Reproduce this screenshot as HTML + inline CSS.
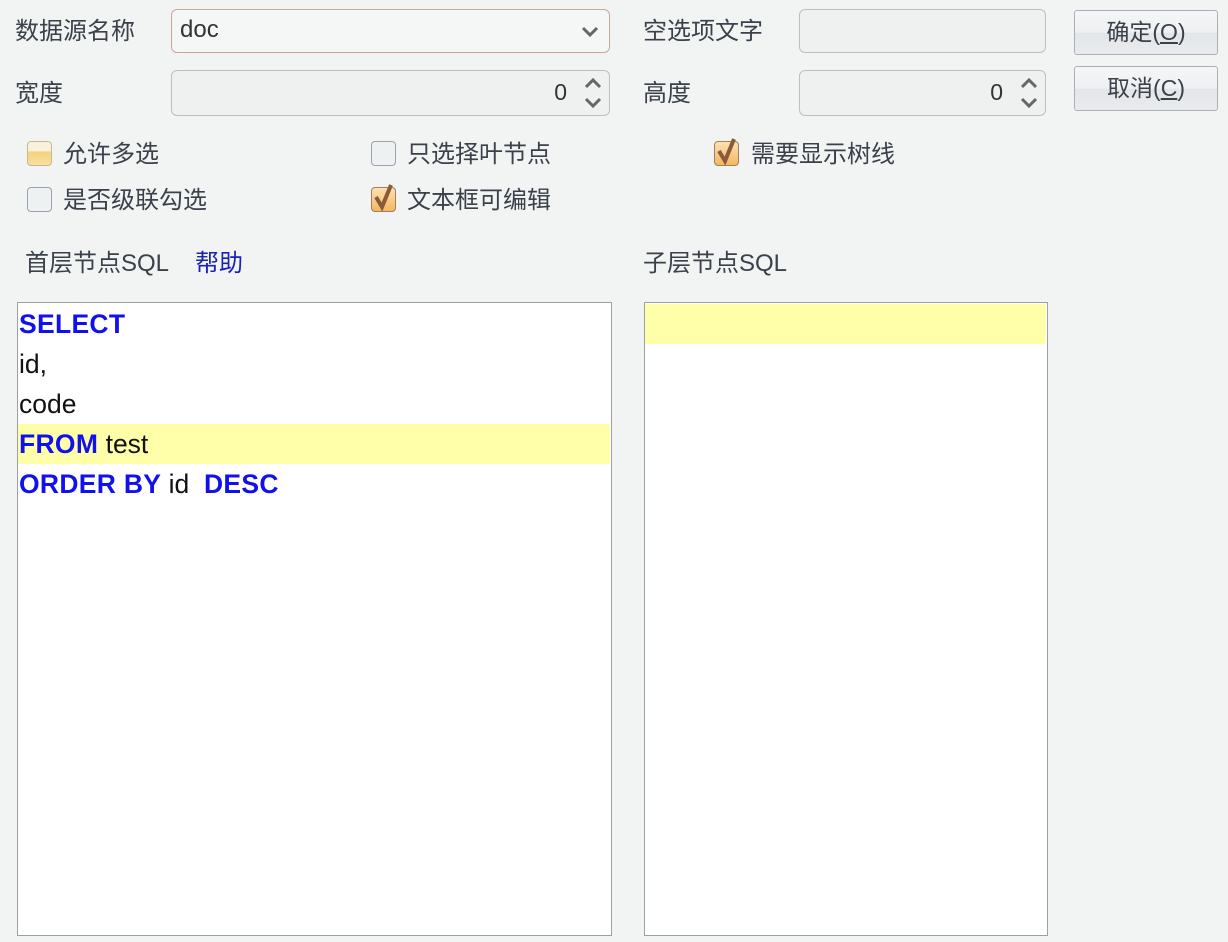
<!DOCTYPE html>
<html><head><meta charset="utf-8"><style>
body{margin:0;width:1228px;height:942px;background:#f2f4f3;font-family:"Liberation Sans","Noto Sans CJK SC",sans-serif;color:#3a414b;position:relative;overflow:hidden}
.a{position:absolute}
.lbl{font-size:24px;line-height:28px}
.field{position:absolute;border:1.5px solid #b9c0c5;border-radius:6px;background:#eff1f0;box-sizing:border-box}
.btn{position:absolute;border:1.5px solid #a9b0b6;border-radius:3px;background:linear-gradient(#f5f6f7 0,#eef0f2 50%,#e3e6e9 51%,#e9ebee);box-sizing:border-box;font-size:23px;text-align:center;line-height:42px}
.cb{position:absolute;width:25px;height:25px;border:1.5px solid #9aa3ab;border-radius:4px;background:#eef1f2;box-sizing:border-box}
.cb.on{border-color:#a08060;background:linear-gradient(#fbe2b0,#f6b660)}
.ta{position:absolute;border:1.5px solid #9aa0a6;background:#fff;box-sizing:border-box}
.ln{position:absolute;left:0;height:40px;line-height:40px;font-size:26.5px;color:#111;padding-left:1px;white-space:pre}
.k{color:#1111ee;font-weight:bold;letter-spacing:0.3px}
</style></head><body>
<div class="a lbl" style="left:15px;top:18px">数据源名称</div>
<div class="field" style="left:171px;top:9px;width:439px;height:44px;border-color:#c9a89a;background:#f5f7f6"><span class="a" style="left:8px;top:6px;font-size:24px;color:#333">doc</span>
<svg class="a" style="right:10px;top:16px" width="18" height="12"><path d="M2 2 L9 9 L16 2" stroke="#666" stroke-width="3" fill="none"/></svg></div>
<div class="a lbl" style="left:15px;top:80px">宽度</div>
<div class="field" style="left:171px;top:70px;width:439px;height:46px"><span class="a" style="right:42px;top:8px;font-size:23px;color:#333">0</span>
<svg class="a" style="right:6px;top:5px" width="20" height="34"><path d="M3 11 L10 4 L17 11 M3 23 L10 30 L17 23" stroke="#666" stroke-width="3" fill="none"/></svg></div>
<div class="a lbl" style="left:643px;top:18px">空选项文字</div>
<div class="field" style="left:799px;top:9px;width:247px;height:44px"></div>
<div class="a lbl" style="left:643px;top:80px">高度</div>
<div class="field" style="left:799px;top:70px;width:247px;height:46px"><span class="a" style="right:42px;top:8px;font-size:23px;color:#333">0</span>
<svg class="a" style="right:6px;top:5px" width="20" height="34"><path d="M3 11 L10 4 L17 11 M3 23 L10 30 L17 23" stroke="#666" stroke-width="3" fill="none"/></svg></div>
<div class="btn" style="left:1074px;top:10px;width:144px;height:45px">确定(<u>O</u>)</div>
<div class="btn" style="left:1074px;top:66px;width:144px;height:45px">取消(<u>C</u>)</div>

<div class="cb" style="left:27px;top:141px;border-color:#c8b890;background:linear-gradient(#f8f2dc 0,#f8f2dc 40%,#f3d37d 41%,#f7e0a0)"></div>
<div class="a lbl" style="left:63px;top:141px">允许多选</div>
<div class="cb" style="left:27px;top:187px"></div>
<div class="a lbl" style="left:63px;top:187px">是否级联勾选</div>
<div class="cb" style="left:371px;top:141px"></div>
<div class="a lbl" style="left:407px;top:141px">只选择叶节点</div>
<div class="cb on" style="left:371px;top:187px"></div>
<svg class="a" style="left:371px;top:182px" width="28" height="30"><path d="M5 15 L11 25 L20 3" stroke="#8a5a3a" stroke-width="4" fill="none"/></svg>
<div class="a lbl" style="left:407px;top:187px">文本框可编辑</div>
<div class="cb on" style="left:714px;top:141px"></div>
<svg class="a" style="left:714px;top:136px" width="28" height="30"><path d="M5 15 L11 25 L20 3" stroke="#8a5a3a" stroke-width="4" fill="none"/></svg>
<div class="a lbl" style="left:751px;top:141px">需要显示树线</div>

<div class="a lbl" style="left:25px;top:250px">首层节点SQL</div>
<div class="a lbl" style="left:195px;top:250px;color:#1a22b0">帮助</div>
<div class="a lbl" style="left:643px;top:250px">子层节点SQL</div>

<div class="ta" style="left:17px;top:302px;width:595px;height:634px">
<div class="ln" style="top:1px"><span class="k">SELECT</span></div>
<div class="ln" style="top:41px">id,</div>
<div class="ln" style="top:81px">code</div>
<div class="ln" style="top:121px;width:591px;background:#ffffaa"><span class="k">FROM</span> test</div>
<div class="ln" style="top:161px"><span class="k">ORDER BY</span> id  <span class="k">DESC</span></div>
</div>
<div class="ta" style="left:644px;top:302px;width:404px;height:634px">
<div class="a" style="left:0;top:1px;width:401px;height:40px;background:#ffffaa"></div>
</div>
</body></html>
